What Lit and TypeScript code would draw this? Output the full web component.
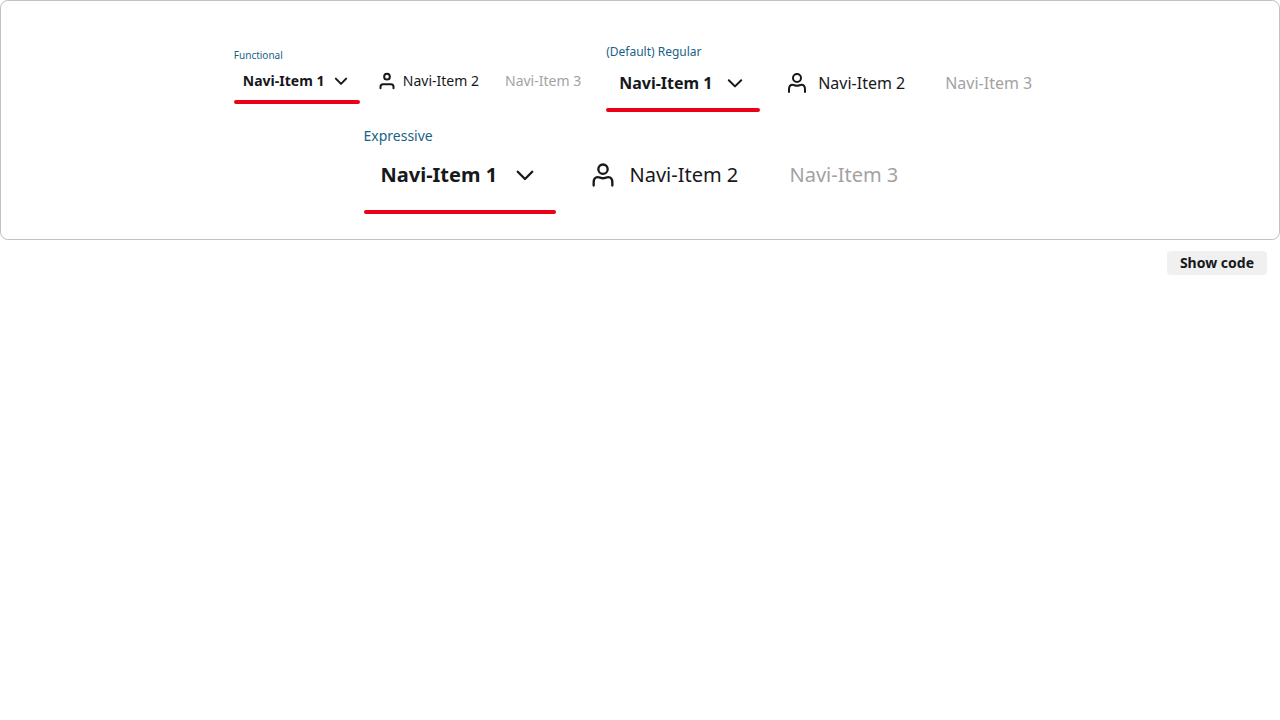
import { LitElement, html, css, svg } from "lit";
import { customElement, property } from "lit/decorators.js";

const chevron = svg`<path d="M5.800 9.200l6.200 6.200 6.200-6.200"/>`;
const person = svg`<circle cx="12" cy="7" r="4"/><path d="M4 21v-2.500c0-3 1.300-4.700 3.500-4.700 1.600 0 2.500 1 4.500 1s2.900-1 4.500-1c2.200 0 3.500 1.700 3.500 4.700V21"/>`;
const personSmall = svg`<circle cx="12" cy="6.800" r="3.400"/><path d="M4.200 20.600v-1.800a3 3 0 0 1 3-3h9.600a3 3 0 0 1 3 3v1.800"/>`;

@customElement("navigation-sample")
class NavigationSample extends LitElement {
  @property() label = "";
  @property({ reflect: true }) density = "regular";

  static styles = css`
    :host {
      display: block;
      --size: 16px;
      --pad: 13px;
      --gap: 12px;
      --icon: 24px;
      --icon-gap: 9px;
      --stroke: 2;
      --top: 11px;
      --row: 24px;
      --bottom: 13px;
      --first: 154px;
      --second: 148px;
      --third: 114px;
      --label: 12px;
      --label-line: 16px;
    }
    :host([density="functional"]) {
      --size: 14px;
      --pad: 9px;
      --gap: 8px;
      --icon: 20px;
      --icon-gap: 6px;
      --stroke: 2.4;
      --top: 7px;
      --bottom: 7px;
      --first: 126px;
      --second: 120px;
      --third: 94px;
      --label: 10px;
      --label-line: 14px;
      padding-bottom: 4px;
    }
    :host([density="expressive"]) {
      --size: 20px;
      --pad: 17px;
      --gap: 16px;
      --icon: 28px;
      --icon-gap: 13px;
      --top: 14px;
      --row: 30px;
      --bottom: 20px;
      --first: 192px;
      --second: 185px;
      --third: 144px;
      --label: 14px;
      --label-line: 20px;
    }
    .label {
      color: #196287;
      font-size: var(--label);
      line-height: var(--label-line);
    }
    .items {
      display: flex;
      gap: var(--gap);
      margin: 0;
      padding: 0;
      list-style: none;
    }
    .item {
      box-sizing: border-box;
      display: flex;
      align-items: center;
      gap: var(--icon-gap);
      padding: var(--top) var(--pad) var(--bottom);
      color: #16181b;
      font-size: var(--size);
      line-height: var(--row);
      text-decoration: none;
      white-space: nowrap;
    }
    .first {
      min-width: var(--first);
      justify-content: space-between;
      gap: 0;
      font-weight: 700;
    }
    .second {
      min-width: var(--second);
    }
    .third {
      min-width: var(--third);
      color: #a2a2a2;
    }
    .line {
      height: 4px;
      border-radius: 2px;
      background: #ec0016;
    }
    svg {
      width: var(--icon);
      height: var(--icon);
      flex: none;
      fill: none;
      stroke: currentColor;
      stroke-width: var(--stroke);
      stroke-linecap: round;
      stroke-linejoin: round;
    }
  `;

  render() {
    return html`
      <div class="label">${this.label}</div>
      <nav aria-label=${this.label}>
        <ul class="items">
          <li>
            <a class="item first" href="#item-1" aria-current="page">
              <span>Navi-Item 1</span>
              <svg viewBox="0 0 24 24" aria-hidden="true">${chevron}</svg>
            </a>
            <div class="line"></div>
          </li>
          <li>
            <a class="item second" href="#item-2">
              <svg viewBox="0 0 24 24" aria-hidden="true">${this.density === "functional" ? personSmall : person}</svg>
              <span>Navi-Item 2</span>
            </a>
          </li>
          <li><a class="item third" href="#item-3" aria-disabled="true">Navi-Item 3</a></li>
        </ul>
      </nav>
    `;
  }
}

@customElement("app-root")
class AppRoot extends LitElement {
  static styles = css`
    :host {
      display: block;
      font-family: "Noto Sans", "Open Sans", sans-serif;
      color: #16181b;
    }
    .card {
      display: flex;
      flex-wrap: wrap;
      align-items: center;
      justify-content: center;
      gap: 14px 16px;
      padding: 43px 200px 25px;
      border: 1px solid #bfc2c7;
      border-radius: 8px;
      background: #fff;
    }
    .actions {
      display: flex;
      justify-content: flex-end;
      padding: 11px 13px;
    }
    .code {
      padding: 0 13px;
      border: 0;
      border-radius: 4px;
      background: #f0f0f0;
      color: inherit;
      font: 700 14px/24px "Noto Sans", "Open Sans", sans-serif;
      min-width: 100px;
    }
  `;

  render() {
    return html`
      <section class="card">
        <navigation-sample label="Functional" density="functional"></navigation-sample>
        <navigation-sample label="(Default) Regular" density="regular"></navigation-sample>
        <navigation-sample label="Expressive" density="expressive"></navigation-sample>
      </section>
      <div class="actions"><button class="code" type="button">Show code</button></div>
    `;
  }
}
